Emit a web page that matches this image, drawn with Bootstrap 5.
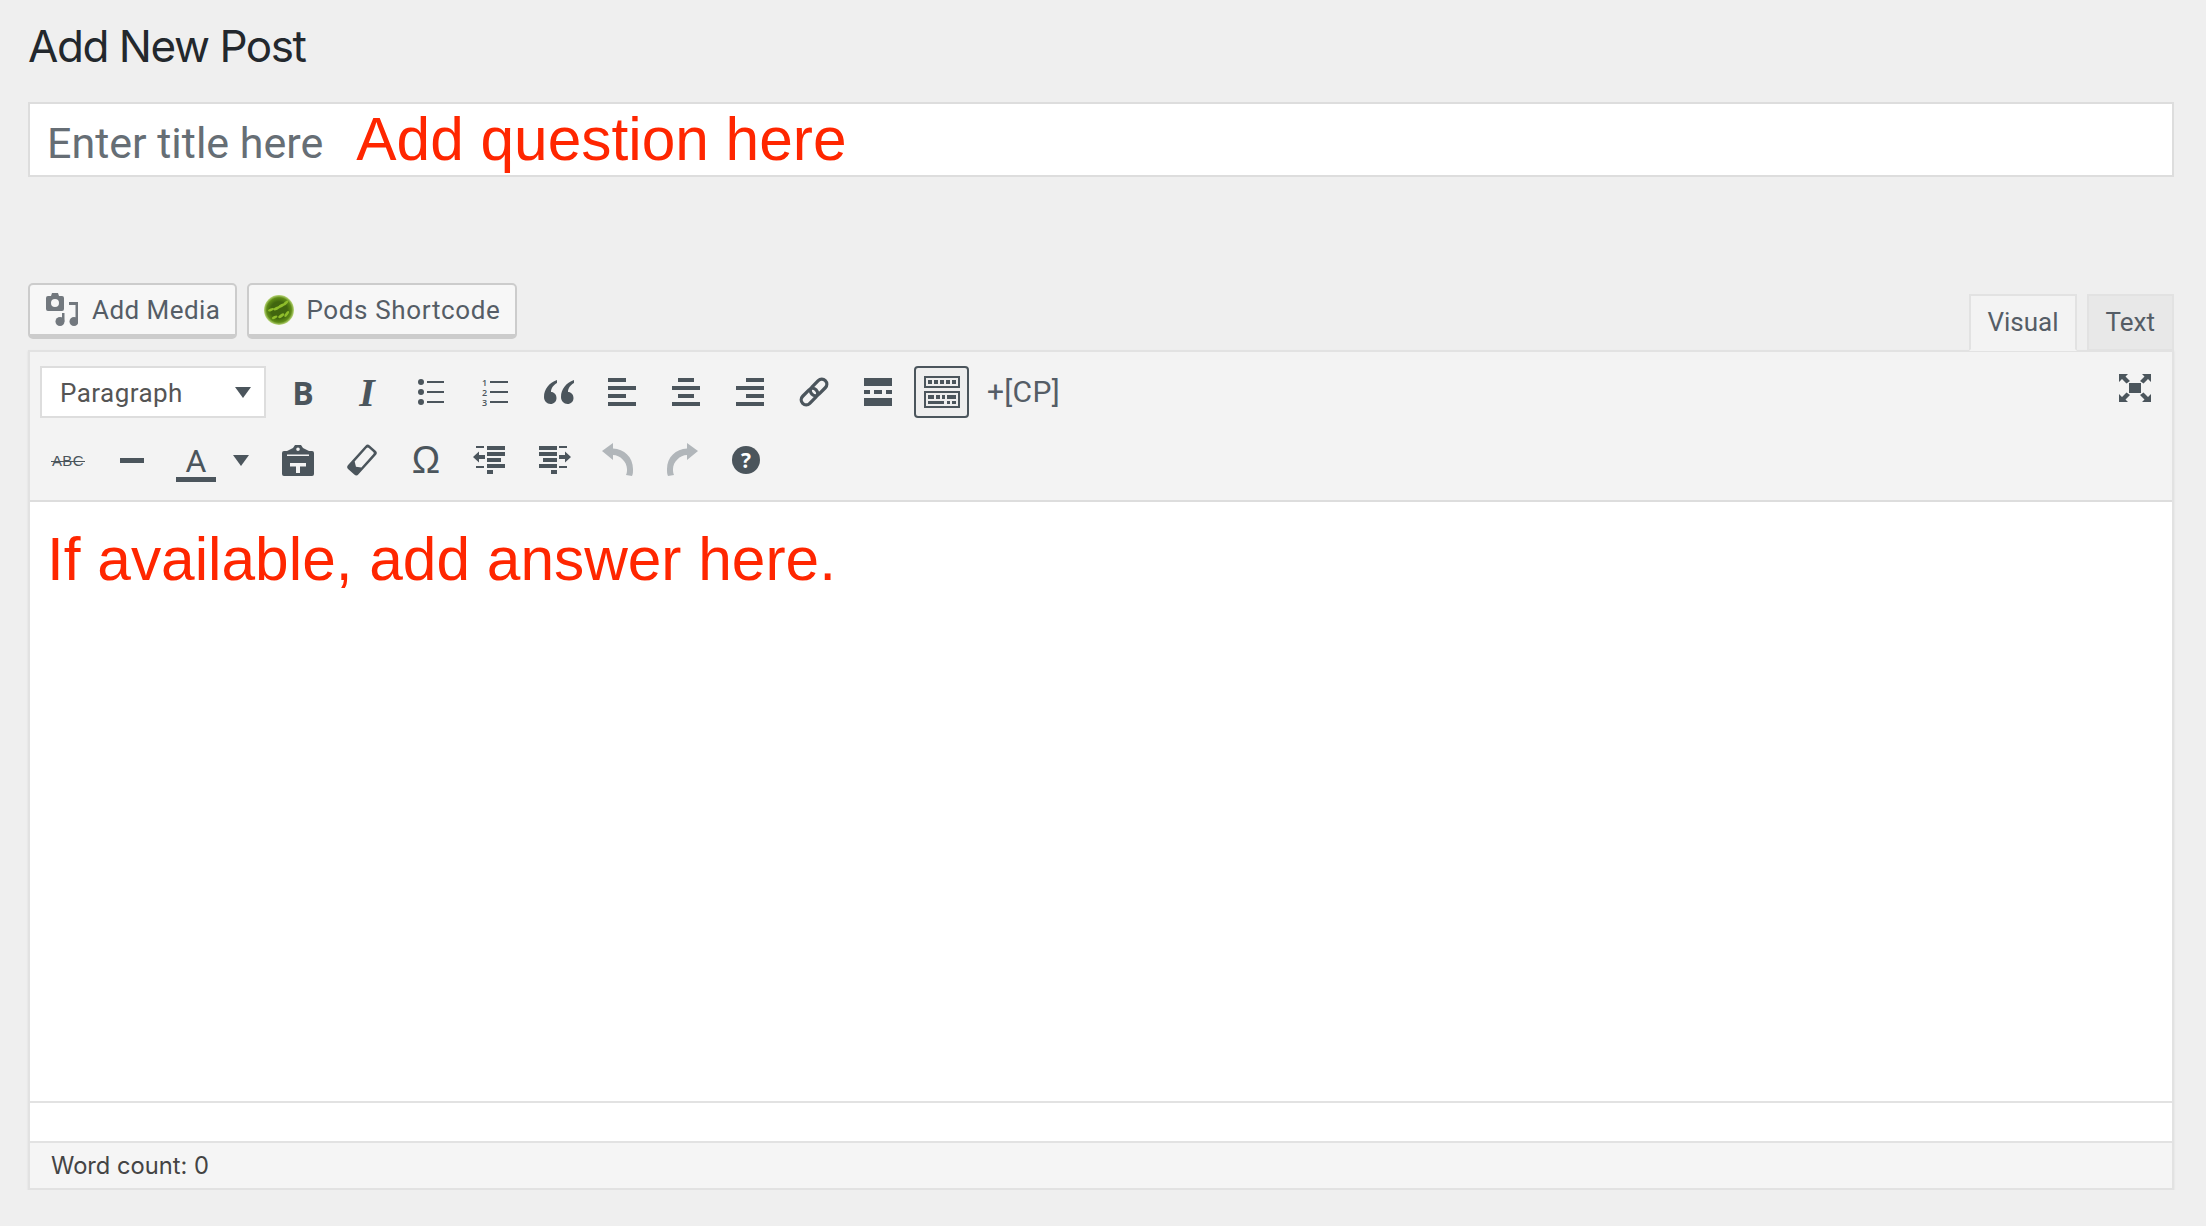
<!DOCTYPE html>
<html lang="en">
<head>
<meta charset="UTF-8">
<title>Add New Post</title>
<link rel="stylesheet" href="https://cdn.jsdelivr.net/npm/bootstrap@5.3.0/dist/css/bootstrap.min.css">
<style>
body { background: #efefef; font-family: Roboto, "Liberation Sans", sans-serif; color: #23282d; }
.page-wrap { padding: 0 32px 0 28px; }
.page-title { font-family: Inter, Roboto, sans-serif; font-size: 44px; font-weight: 400; line-height: 50px; margin: 0; padding-top: 21px; height: 102px; letter-spacing: -1.45px; color: #23282d; }
.title-box { height: 75px; background: #fff; border: 2px solid #ddd; padding-left: 17px; gap: 33px; }
.title-hint { font-size: 43px; color: #666e75; line-height: 1; padding-top: 8px; }
.red-note { font-family: "Liberation Sans", Arial, sans-serif; font-size: 60.4px; color: #ff2600; line-height: 1; }
.media-row { margin-top: 106px; height: 67px; }
.wp-btn { height: 56px; background: #f7f7f7; border: 2px solid #ccc; border-bottom-width: 5px; border-radius: 5px; color: #555d66; font-size: 26px; letter-spacing: .45px; line-height: 1; padding: 0 15px 0 16px; gap: 14px; }
.wp-btn.pods-btn { padding: 0 14px 0 15px; gap: 12px; letter-spacing: .65px; }
.btn-gap { gap: 10px; }
.wp-tab { height: 57px; padding: 0 17px; font-size: 26px; border: 2px solid #e2e2e2; margin-bottom: -1px; color: #555d66; background: #e8e8e8; }
.wp-tab.on { padding: 0 16px; background: #f3f3f3; border-bottom-color: #f3f3f3; position: relative; z-index: 1; }
.tab-gap { gap: 10px; }
.editor-frame { border: 2px solid #e2e2e2; }
.tool-area { background: #f3f3f3; height: 150px; padding: 14px 10px 0; border-bottom: 2px solid #ddd; position: relative; }
.tool-row { height: 52px; gap: 12px; color: #4b555c; }
.tool-row + .tool-row { margin-top: 16px; }
.fmt-select { width: 226px; height: 52px; background: #fff; border: 2px solid #ddd; font-size: 26px; letter-spacing: .45px; color: #555; padding: 0 13px 0 18px; margin-right: -1px; }
.fmt-label { padding-top: 2px; }
.tri { width: 0; height: 0; border-left: 8px solid transparent; border-right: 8px solid transparent; border-top: 11px solid #4b555c; }
.tool-btn { width: 52px; height: 52px; flex: none; }
.tool-btn svg { display: block; overflow: visible; }
.tool-first { margin-left: 2px; }
.nudge-l { margin-left: -1px; }
.nudge-r { margin-left: 2px; }
.tool-active { width: 55px; margin-left: -2px; border: 2px solid #4b555c; border-radius: 4px; background: #eee; }
.cp-btn { font-size: 30px; letter-spacing: .3px; color: #555d66; padding: 0 0 2px 6px; height: 52px; }
.caret-btn { width: 38px; margin-left: -12px; height: 52px; }
.full-btn { position: absolute; right: 21px; top: 22px; color: #4b555c; }
.full-btn svg { display: block; }
.glyph-b { font: 700 32px "Open Sans", sans-serif; }
.glyph-i { font: italic 700 40px "Liberation Serif", serif; }
.glyph-abc { font: 400 15px "Liberation Sans", sans-serif; position: relative; letter-spacing: .4px; }
.glyph-abc::after { content: ""; position: absolute; left: -1px; right: -1px; top: 9px; height: 1.5px; background: #4b555c; }
.glyph-a { font-size: 32px; line-height: 1; }
.a-bar { width: 40px; height: 5px; background: #4b555c; }
.glyph-omega { font: 400 38px "Liberation Sans", sans-serif; line-height: 1; }
.help-dot { width: 28px; height: 28px; border-radius: 50%; background: #4b555c; color: #fff; font: 700 21px "Open Sans", sans-serif; }
.edit-body { height: 601px; background: #fff; border-bottom: 2px solid #e2e2e2; padding: 27px 0 0 17px; }
.edit-gap { height: 40px; background: #fff; border-bottom: 2px solid #e2e2e2; }
.word-bar { height: 45px; background: #f5f5f5; padding-left: 21px; font-family: Inter, Roboto, sans-serif; font-size: 23.7px; color: #444; }
.frame-shadow { box-shadow: 0 1px 2px rgba(0,0,0,.08); }
</style>
</head>
<body>
<div class="page-wrap">
  <h1 class="page-title">Add New Post</h1>

  <div class="title-box d-flex align-items-center">
    <span class="title-hint">Enter title here</span>
    <span class="red-note">Add question here</span>
  </div>

  <div class="media-row d-flex justify-content-between align-items-start">
    <div class="d-flex btn-gap">
      <div class="wp-btn d-flex align-items-center">
        <svg width="32" height="33" viewBox="0 0 32 33" fill="#72787e"><path fill-rule="evenodd" d="M2 3h3l1-3h6l1 3h3a2 2 0 0 1 2 2v11a2 2 0 0 1-2 2H2a2 2 0 0 1-2-2V5a2 2 0 0 1 2-2zm7 3a4 4 0 1 0 0 8 4 4 0 0 0 0-8z"/><path d="M23 9h9v20h-2.500V12H23z"/><circle cx="28" cy="28.500" r="4.500"/><path d="M16 20h2.500v8.500H16z"/><circle cx="14" cy="28.500" r="4.500"/></svg>
        <span>Add Media</span>
      </div>
      <div class="wp-btn pods-btn d-flex align-items-center">
        <svg width="30" height="30" viewBox="0 0 30 30"><defs><radialGradient id="podsGlow"><stop offset="55%" stop-color="#41660f"/><stop offset="82%" stop-color="#5f8c16"/><stop offset="100%" stop-color="#bcd87c"/></radialGradient></defs><circle cx="15" cy="15" r="15" fill="url(#podsGlow)"/><g fill="#8fbd2b"><ellipse cx="7" cy="14.700" rx="3.200" ry="1.400" transform="rotate(-20 7 14.700)"/><ellipse cx="12.700" cy="13.300" rx="3.500" ry="1.500" transform="rotate(-25 12.700 13.300)"/><ellipse cx="17.300" cy="10.700" rx="3.500" ry="1.500" transform="rotate(-30 17.300 10.700)"/><ellipse cx="21.700" cy="8" rx="3.200" ry="1.400" transform="rotate(-45 21.700 8)"/><ellipse cx="10.700" cy="22.300" rx="3" ry="1.400" transform="rotate(-25 10.700 22.300)"/><ellipse cx="17.300" cy="20.700" rx="3.500" ry="1.500" transform="rotate(-35 17.300 20.700)"/><ellipse cx="22.700" cy="19" rx="3.500" ry="1.400" transform="rotate(-55 22.700 19)"/></g></svg>
        <span>Pods Shortcode</span>
      </div>
    </div>
    <div class="d-flex tab-gap align-self-end">
      <div class="wp-tab on d-flex align-items-center">Visual</div>
      <div class="wp-tab d-flex align-items-center">Text</div>
    </div>
  </div>

  <div class="editor-frame frame-shadow">
    <div class="tool-area">
      <div class="tool-row d-flex">
        <div class="fmt-select d-flex align-items-center justify-content-between"><span class="fmt-label">Paragraph</span><span class="tri"></span></div>
        <div class="tool-btn d-flex align-items-center justify-content-center glyph-b">B</div>
        <div class="tool-btn d-flex align-items-center justify-content-center glyph-i">I</div>
        <div class="tool-btn d-flex align-items-center justify-content-center">
          <svg width="32" height="32" viewBox="0 0 32 32" fill="currentColor"><circle cx="6" cy="6" r="3"/><circle cx="6" cy="16" r="3"/><circle cx="6" cy="26" r="3"/><path d="M12 5h17v2H12zM12 15h17v2H12zM12 25h17v2H12z"/></svg>
        </div>
        <div class="tool-btn d-flex align-items-center justify-content-center">
          <svg width="32" height="32" viewBox="0 0 32 32" fill="currentColor"><text x="3" y="9.500" font-size="9" font-family="Open Sans" font-weight="600">1</text><text x="3" y="19.500" font-size="9" font-family="Open Sans" font-weight="600">2</text><text x="3" y="29.500" font-size="9" font-family="Open Sans" font-weight="600">3</text><path d="M11 5h18v2H11zM11 15h18v2H11zM11 25h18v2H11z"/></svg>
        </div>
        <div class="tool-btn d-flex align-items-center justify-content-center">
          <svg width="30" height="24" viewBox="0 0 30 24" fill="currentColor"><path d="M13 0C5 3 0 9 0 17c0 4 3 7 6.500 7s6-2.500 6-6-2.500-6-5.500-6c0-4 2.500-7 6-9z"/><path d="M30 0c-8 3-13 9-13 17 0 4 3 7 6.500 7s6-2.500 6-6-2.500-6-5.500-6c0-4 2.500-7 6-9z"/></svg>
        </div>
        <div class="tool-btn nudge-l d-flex align-items-center justify-content-center">
          <svg width="28" height="28" viewBox="0 0 28 28" fill="currentColor"><path d="M0 0h18v4H0zM0 8h28v4H0zM0 16h18v4H0zM0 24h28v4H0z"/></svg>
        </div>
        <div class="tool-btn d-flex align-items-center justify-content-center">
          <svg width="28" height="28" viewBox="0 0 28 28" fill="currentColor"><path d="M6 0h16v4H6zM0 8h28v4H0zM6 16h16v4H6zM0 24h28v4H0z"/></svg>
        </div>
        <div class="tool-btn d-flex align-items-center justify-content-center">
          <svg width="28" height="28" viewBox="0 0 28 28" fill="currentColor"><path d="M10 0h18v4H10zM0 8h28v4H0zM10 16h18v4H10zM0 24h28v4H0z"/></svg>
        </div>
        <div class="tool-btn d-flex align-items-center justify-content-center">
          <svg width="36" height="36" viewBox="0 0 36 36" fill="none" stroke="currentColor" stroke-width="3.300"><g transform="rotate(-45 18 18)"><rect x="2" y="13" width="19" height="10" rx="5"/><rect x="15" y="13" width="19" height="10" rx="5"/></g></svg>
        </div>
        <div class="tool-btn d-flex align-items-center justify-content-center">
          <svg width="28" height="28" viewBox="0 0 28 28" fill="currentColor"><path d="M0 0h28v8H0zM0 12h6v4H0zM10 12h8v4h-8zM22 12h6v4h-6zM0 20h28v8H0z"/></svg>
        </div>
        <div class="tool-btn tool-active d-flex align-items-center justify-content-center">
          <svg width="36" height="32" viewBox="0 0 36 32" fill="currentColor"><path fill-rule="evenodd" d="M0 0h36v12H0zM2 2v8h32V2zM0 15h36v17H0zM2 17v13h32V17z"/><path d="M4 4h4v4H4zM10 4h4v4h-4zM16 4h4v4h-4zM22 4h4v4h-4zM28 4h4v4h-4zM4 19h6v4H4zM12 19h4v4h-4zM18 19h3v4h-3zM23 19h9v4h-9zM4 25h16v3H4zM23 25h3v3h-3zM28 25h4v3h-4z"/></svg>
        </div>
        <div class="cp-btn d-flex align-items-center">+[CP]</div>
      </div>

      <div class="tool-row d-flex">
        <div class="tool-btn tool-first d-flex align-items-center justify-content-center"><span class="glyph-abc">ABC</span></div>
        <div class="tool-btn d-flex align-items-center justify-content-center">
          <svg width="24" height="5" viewBox="0 0 24 5" fill="currentColor"><rect width="24" height="5"/></svg>
        </div>
        <div class="tool-btn d-flex flex-column align-items-center justify-content-end pb-1">
          <span class="glyph-a">A</span>
          <span class="a-bar"></span>
        </div>
        <div class="caret-btn d-flex align-items-center justify-content-center"><span class="tri"></span></div>
        <div class="tool-btn d-flex align-items-center justify-content-center">
          <svg width="32" height="31" viewBox="0 0 32 31" fill="currentColor"><path fill-rule="evenodd" d="M2 6h3v5h22V6h3a2 2 0 0 1 2 2v21a2 2 0 0 1-2 2H2a2 2 0 0 1-2-2V8a2 2 0 0 1 2-2zM8 18v3.500h6V28h4v-6.500h6V18z"/><path fill-rule="evenodd" d="M5 9.500V6l6-3 2-3h6l2 3 6 3v3.500zM16 2.500a1.800 1.800 0 1 0 0 3.600 1.800 1.800 0 0 0 0-3.600z"/></svg>
        </div>
        <div class="tool-btn d-flex align-items-center justify-content-center">
          <svg width="28" height="30" viewBox="0 0 28 30" fill="currentColor"><g transform="rotate(-48 14 15)"><path fill-rule="evenodd" d="M1 8h26a3 3 0 0 1 3 3v8a3 3 0 0 1-3 3H1a3 3 0 0 1-3-3v-8a3 3 0 0 1 3-3zM8 10.500l-3 4.500 3 4.500h18a1.500 1.500 0 0 0 1.500-1.500v-6a1.500 1.500 0 0 0-1.500-1.500z"/></g></svg>
        </div>
        <div class="tool-btn d-flex align-items-center justify-content-center glyph-omega">Ω</div>
        <div class="tool-btn nudge-l d-flex align-items-center justify-content-center">
          <svg width="32" height="28" viewBox="0 0 32 28" fill="currentColor"><path d="M3 0h8v2H3zM14 0h18v4H14zM14 6h18v4H14zM14 12h14v4H14zM3 20h8v2H3zM14 18h18v4H14zM14 24h6v4h-6zM0 11l6-5.500V9h6v4H6v3.500z"/></svg>
        </div>
        <div class="tool-btn nudge-r d-flex align-items-center justify-content-center">
          <svg width="32" height="28" viewBox="0 0 32 28" fill="currentColor"><path d="M20 0h8v2h-8zM0 0h18v4H0zM0 6h18v4H0zM4 12h14v4H4zM20 20h8v2h-8zM0 18h18v4H0zM12 24h6v4h-6zM32 11l-6-5.500V9h-6v4h6v3.500z"/></svg>
        </div>
        <div class="tool-btn nudge-l d-flex align-items-center justify-content-center">
          <svg width="32" height="34" viewBox="0 0 32 34" fill="#b1b6ba"><path d="M0 8l11-8v5.500C22 6 31 14 31 26c0 3 0 5-1 7l-6-1c1-2 1-4 1-6 0-7-7-14-14-14v5z"/></svg>
        </div>
        <div class="tool-btn d-flex align-items-center justify-content-center">
          <svg width="32" height="34" viewBox="0 0 32 34" fill="#b1b6ba"><path d="M32 8L21 0v5.500C10 6 1 14 1 26c0 3 0 5 1 7l6-1c-1-2-1-4-1-6 0-7 7-14 14-14v5z"/></svg>
        </div>
        <div class="tool-btn d-flex align-items-center justify-content-center"><span class="help-dot d-flex align-items-center justify-content-center">?</span></div>
      </div>

      <div class="full-btn">
        <svg width="32" height="28" viewBox="0 0 32 28" fill="currentColor"><path d="M10 9h12v10H10zM0 0h9L6.500 2.500 11 7 7.500 9.500 3 5 0 8zM32 0h-9l2.500 2.500L21 7l3.500 2.500L29 5l3 3zM0 28h9l-2.500-2.500L11 21l-3.500-2.500L3 23l-3-3zM32 28h-9l2.500-2.500L21 21l3.500-2.500L29 23l3-3z"/></svg>
      </div>
    </div>

    <div class="edit-body"><span class="red-note">If available, add answer here.</span></div>
    <div class="edit-gap"></div>
    <div class="word-bar d-flex align-items-center">Word count: 0</div>
  </div>
</div>
<script src="https://cdn.jsdelivr.net/npm/bootstrap@5.3.0/dist/js/bootstrap.bundle.min.js"></script>
</body>
</html>
